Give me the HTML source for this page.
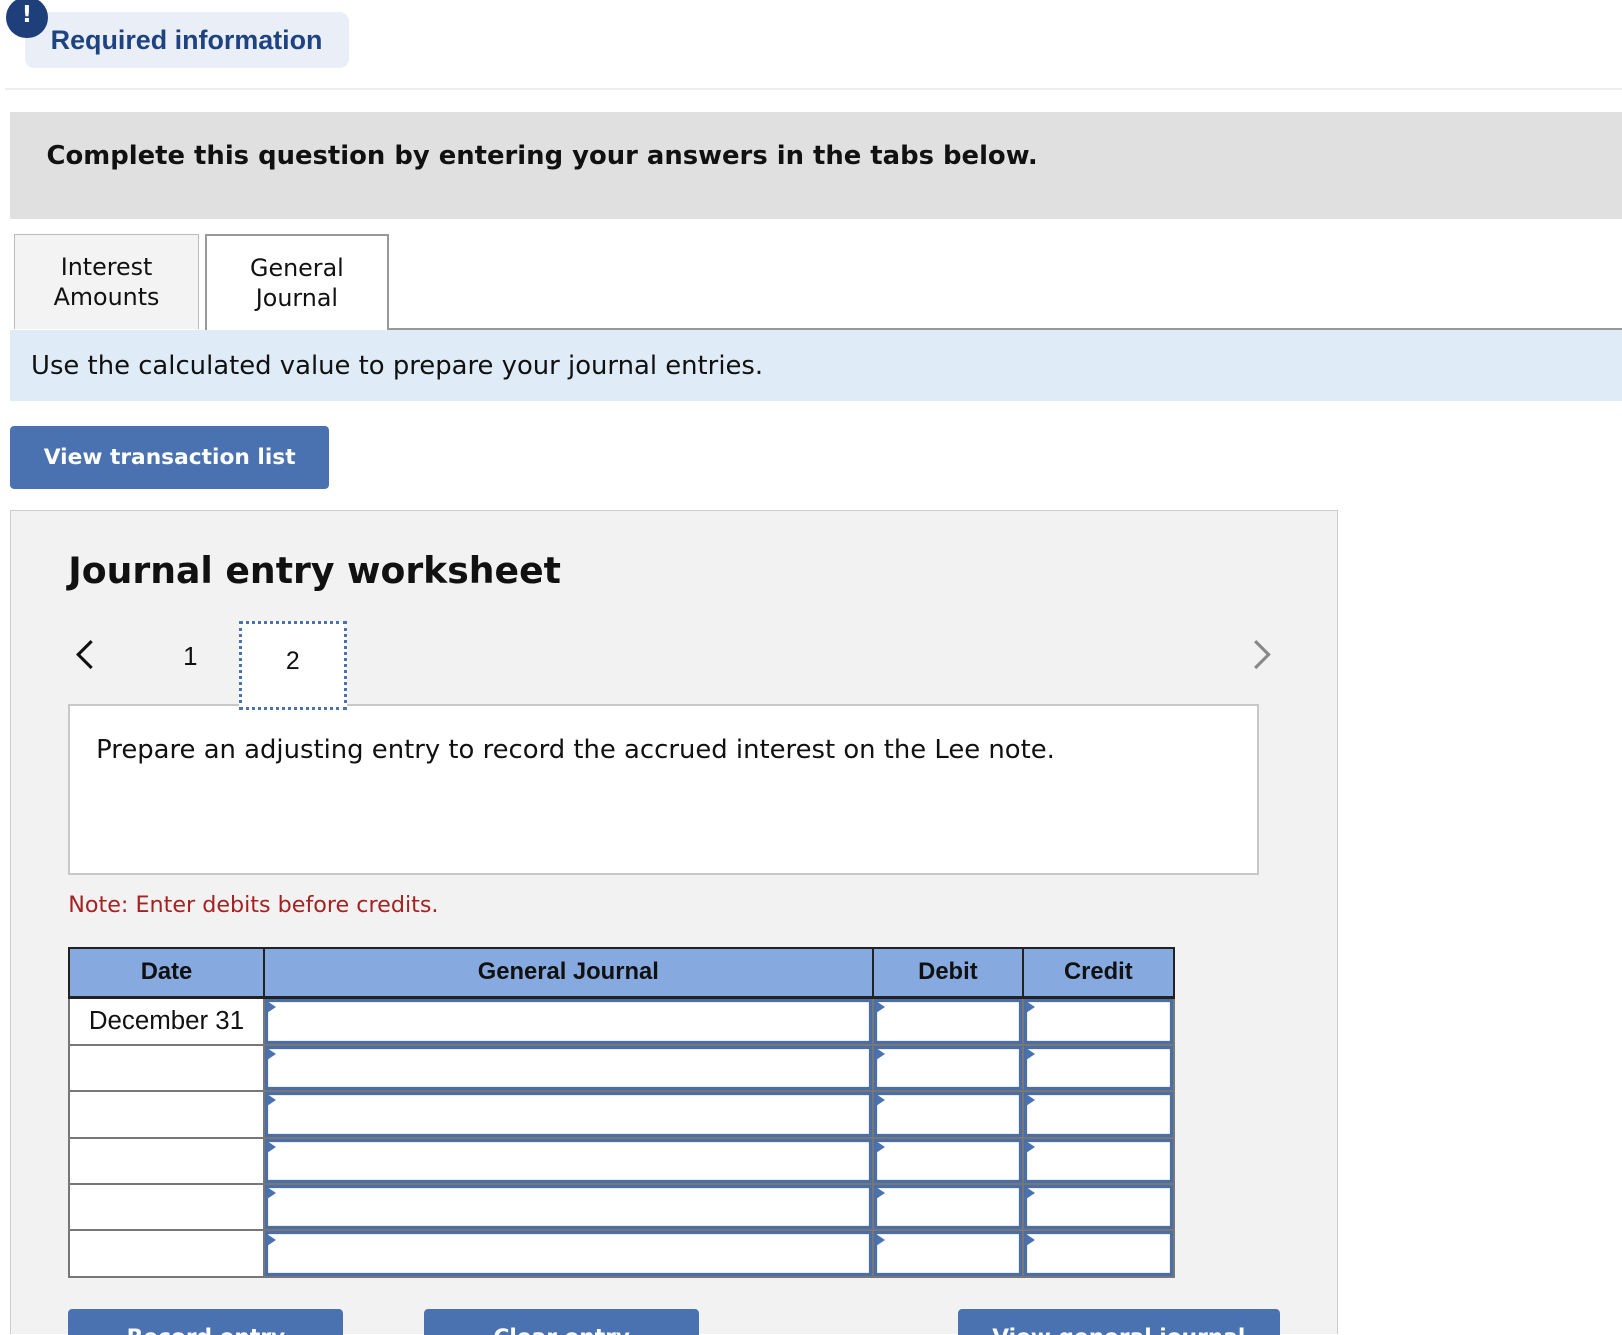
<!DOCTYPE html>
<html><head><meta charset="utf-8">
<style>
html{zoom:1.0345;overflow:hidden}
body{margin:0;background:#fff;font-family:"DejaVu Sans","Liberation Sans",sans-serif;color:#111;overflow:hidden}
#wrap{width:1568px;height:1290px;overflow:hidden;position:relative}
.abs{position:absolute}
.circle{left:6px;top:-3px;width:40px;height:40px;border-radius:50%;background:#1f3f7a;color:#fff;font-weight:bold;font-size:22px;text-align:center;line-height:36px}
.req{left:24px;top:12px;width:313px;height:54px;background:#e9eef7;border-radius:9px;color:#1f4280;font-weight:bold;line-height:56px;padding-left:25px;box-sizing:border-box;font-family:"Liberation Sans",sans-serif;font-size:26px}
.hr{left:5px;right:0;top:85px;height:2px;background:#eee}
.gray{left:10px;right:0;top:108px;height:104px;background:#e0e0e0}
.gray span{position:absolute;left:35px;top:28px;font-weight:bold;font-size:25px;letter-spacing:0px}
.tab{top:226px;width:178px;height:92px;box-sizing:border-box;text-align:center;font-size:23px;line-height:29px;padding-top:17px}
.t1{left:14px;background:#f3f3f3;border:1px solid #bbb;border-bottom:none}
.t2{left:198px;background:#fff;border:2px solid #999;border-bottom:none;height:93px;z-index:2}
.tabline{left:376px;right:0;top:317px;height:2px;background:#999}
.info{left:10px;right:0;top:319px;height:69px;background:#dfebf7}
.info span{position:absolute;left:20px;top:20px;font-size:25px}
.btn{background:#4a72b0;color:#fff;font-weight:bold;border-radius:4px;text-align:center;font-size:21px}
.panel{left:10px;top:493px;width:1283px;height:797px;background:#f2f2f2;border:1px solid #ccc;border-bottom:none;box-sizing:border-box}
.title{left:66px;top:531px;font-weight:bold;font-size:35px}
.box2{left:231px;top:600px;width:104px;height:86px;box-sizing:border-box;border:3px dotted #4a72b0;background:#fff;text-align:center;line-height:74px;font-size:24px;font-family:"Liberation Sans",sans-serif;z-index:3}
.instr{left:66px;top:681px;width:1151px;height:165px;background:#fff;border:2px solid #c8c8c8;box-sizing:border-box}
.instr span{position:absolute;left:25px;top:28px;font-size:25px}
.note{left:66px;top:862px;color:#a52222;font-size:21.5px}
table{position:absolute;left:66px;top:915px;border-collapse:collapse;font-family:"Liberation Sans",sans-serif;font-size:23px}
th{background:#86aadf;height:46px;border:2px solid #222;border-bottom:3px solid #222;font-weight:bold;color:#111;padding:0}
td{height:43px;padding:0;border:2px solid #777;background:#fff}
td.in{position:relative;box-shadow:inset 0 0 0 3px #4b6ea5}
td.in:before{content:"";position:absolute;left:2px;top:2px;border-left:9px solid #4a72b0;border-top:6px solid transparent;border-bottom:6px solid transparent}
td.d{text-align:center;font-size:25px}
</style></head><body><div id="wrap">
<div class="abs req">Required information</div>
<div class="abs circle">!</div>
<div class="abs hr"></div>
<div class="abs gray"><span>Complete this question by entering your answers in the tabs below.</span></div>
<div class="abs tab t1">Interest<br>Amounts</div>
<div class="abs tab t2">General<br>Journal</div>
<div class="abs tabline"></div>
<div class="abs info"><span>Use the calculated value to prepare your journal entries.</span></div>
<div class="abs btn" style="left:10px;top:412px;width:308px;height:61px;line-height:61px">View transaction list</div>
<div class="abs panel"></div>
<div class="abs title">Journal entry worksheet</div>
<svg class="abs" style="left:70px;top:617px" width="24" height="32"><path d="M19 3 L6 16 L19 29" stroke="#111" stroke-width="3" fill="none"/></svg>
<div class="abs" style="left:177px;top:622px;font-size:25px;font-family:'Liberation Sans',sans-serif">1</div>
<div class="abs box2">2</div>
<svg class="abs" style="left:1208px;top:617px" width="24" height="32"><path d="M5 3 L18 16 L5 29" stroke="#888" stroke-width="3" fill="none"/></svg>
<div class="abs instr"><span>Prepare an adjusting entry to record the accrued interest on the Lee note.</span></div>
<div class="abs note">Note: Enter debits before credits.</div>
<table>
<tr><th style="width:186px">Date</th><th style="width:587px">General Journal</th><th style="width:143px">Debit</th><th style="width:144px">Credit</th></tr>
<tr><td class="d">December 31</td><td class="in"></td><td class="in"></td><td class="in"></td></tr>
<tr><td></td><td class="in"></td><td class="in"></td><td class="in"></td></tr>
<tr><td></td><td class="in"></td><td class="in"></td><td class="in"></td></tr>
<tr><td></td><td class="in"></td><td class="in"></td><td class="in"></td></tr>
<tr><td></td><td class="in"></td><td class="in"></td><td class="in"></td></tr>
<tr><td></td><td class="in"></td><td class="in"></td><td class="in"></td></tr>
</table>
<div class="abs btn" style="left:66px;top:1265px;width:266px;height:60px;line-height:56px">Record entry</div>
<div class="abs btn" style="left:410px;top:1265px;width:266px;height:60px;line-height:56px">Clear entry</div>
<div class="abs btn" style="left:926px;top:1265px;width:311px;height:60px;line-height:56px">View general journal</div>
</div></body></html>
